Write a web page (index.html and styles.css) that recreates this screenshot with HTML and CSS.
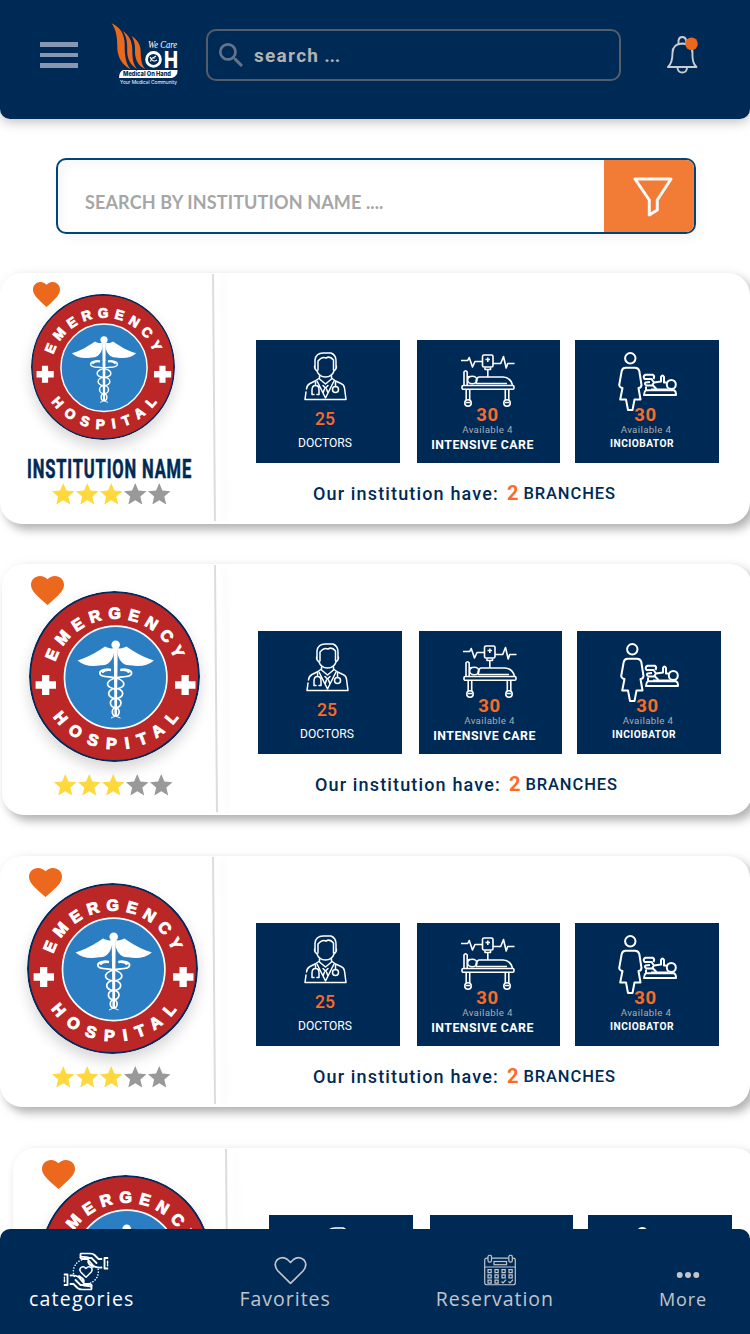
FILE: index.html
```html
<!DOCTYPE html>
<html lang="en">
<head>
<meta charset="utf-8">
<title>Medical On Hand</title>
<link rel="stylesheet" href="styles.css">
</head>
<body>
<svg class="defs" width="0" height="0" aria-hidden="true">
  <defs>
    <path id="arc-top" d="M26.300 70.900A63.500 63.500 0 0 1 146.700 70.900"/>
    <path id="arc-bottom" d="M23.900 126.100A78 78 0 0 0 150.100 126.100"/>
    <symbol id="heart" viewBox="2 3 20 18.35" preserveAspectRatio="none"><path d="M12 21.35l-1.45-1.32C5.4 15.36 2 12.28 2 8.5 2 5.42 4.42 3 7.5 3c1.74 0 3.41.81 4.5 2.09C13.09 3.81 14.76 3 16.5 3 19.58 3 22 5.42 22 8.5c0 3.78-3.4 6.86-8.55 11.54z"/></symbol>
    <symbol id="star" viewBox="2 2 20 19" preserveAspectRatio="none"><path d="M12 17.27 18.18 21l-1.64-7.03L22 9.24l-7.19-.61L12 2 9.19 8.63 2 9.24l5.46 4.73L5.82 21z"/></symbol>
    <symbol id="emblem" viewBox="0 0 171 171" preserveAspectRatio="none">
      <circle cx="85.5" cy="85.5" r="84.5" fill="#bb2626" stroke="#002b5a" stroke-width="2"/>
      <circle cx="86.7" cy="86.4" r="51.2" fill="#2b7ec2" stroke="#fff" stroke-width="1.7"/>
      <path fill="#fff" d="M13 84h7.3v6.3H27v7.4h-6.7v6.3H13v-6.3H6.6v-7.4H13zM152.500 84h7.300v6.300h6.700v7.400h-6.700v6.300h-7.300v-6.300h-6.400v-7.400h6.400z"/>
      <g class="emblem-text">
        <text textLength="155"><textPath href="#arc-top" textLength="155" startOffset="0">EMERGENCY</textPath></text>
        <text textLength="146"><textPath href="#arc-bottom" textLength="146" startOffset="0">HOSPITAL</textPath></text>
      </g>
      <g fill="#fff">
        <circle cx="86.7" cy="53.7" r="4.3"/>
        <path d="M85 57C82 58 79 57 76 55.500C70 59 65 64 48.500 69.500C55 75 63 76 72 74.300C80 75 84 68 85 62zM88.400 57C91.400 58 94.400 57 97.400 55.500C103.400 59 108.400 64 124.900 69.500C118.400 75 110.400 76 101.400 74.300C93.400 75 89.400 68 88.400 62z"/>
        <path d="M84.700 56h4l-.8 69h-2.400z"/>
      </g>
      <g fill="none" stroke="#fff" stroke-width="1.700">
        <path d="M82 79C75 77 70 80 71 83C72 87 82 85 87 87C97 90 98 96 87 98M91.400 79C98.400 77 103.400 80 102.400 83C101.400 87 91.400 85 86.400 87C76.400 90 75.400 96 86.400 98"/>
        <path d="M73 81.500c2-2.500 6-3 9-2.500M100.400 81.500c-2-2.500-6-3-9-2.500" stroke-width="2.500"/>
        <ellipse cx="86.700" cy="102.500" rx="7" ry="5"/><ellipse cx="86.700" cy="112" rx="5.300" ry="4.700"/><ellipse cx="86.700" cy="121" rx="3.400" ry="4"/>
        <path d="M82 127l4.500-2 5 2" stroke-width="1"/>
      </g>
    </symbol>
    <symbol id="doctor" viewBox="0 0 43 49">
      <g fill="none" stroke="#fff" stroke-width="1.500" stroke-linejoin="round" stroke-linecap="round">
        <path d="M11 16V8Q12 1 19 1H27Q32 3 32 9V16M14 14V9Q18 4 22 6Q26 3.500 29.500 8V14M11 13Q9.500 16 13 19Q15 25 21.500 25Q28 25 30 19Q33.500 16 32 13M14 14V18M29.500 14V18"/>
        <path d="M15.500 24V27L21.500 32 27.500 27V24M15.500 26L11 29 6 31.500Q3 33 2.500 37M2 40L1 47.500H42L40.500 36Q40 32.500 36.500 31.200L31.500 29 27.500 26"/>
        <path d="M13 29L21.500 46 30 29M19 33.500L21.500 36 24 33.500M20.500 37L19 41M22.500 37L24 41M11.500 30V33M8 42.500V38Q8 33.500 11.500 33.500T15 38V42.500H13M8 42.500H10M31.500 30V34.500"/><circle cx="31.500" cy="37.500" r="3"/>
      </g>
    </symbol>
    <symbol id="bed" viewBox="0 0 54 54">
      <g fill="none" stroke="#fff" stroke-width="1.600" stroke-linejoin="round">
        <path d="M0 6.500H6.700L8.200 3.500 11.500 13 14 7.500H21M32 9.500H39.700L42.500 2.500 45.200 14 46.700 9.500H53.500"/>
        <rect x="21.500" y="1" width="10.500" height="12" rx="1.500"/>
        <path d="M26.800 3.500V8M24.500 5.500H29M24 13.500V15.500H29.500V13.500M26.800 15.500V22.500M3 31V18Q4.500 15.500 6.200 18V31M6.200 23L9 22.500M17.500 23H42Q49.500 23.500 51.500 31M17.500 23Q14 25 15.500 29.500H46"/>
        <ellipse cx="11.300" cy="26" rx="4.700" ry="3.700"/>
        <rect x="1" y="31.500" width="52" height="3.700" rx="1.300"/>
        <path d="M5.200 35.500V46M8.700 35.500V46M44.300 35.500V46M47.800 35.500V46"/><circle cx="7" cy="49" r="3.200"/><circle cx="46" cy="49" r="3.200"/><path d="M5 48.500H9M44 48.500H48"/>
      </g>
    </symbol>
    <symbol id="incubator" viewBox="0 0 59 59">
      <g fill="none" stroke="#fff" stroke-width="2" stroke-linejoin="round">
        <circle cx="12.300" cy="6.300" r="5.200"/>
        <path d="M7.500 15.800H17Q20.500 16 21.300 19L23.500 33Q23 36 20.500 36L22.500 47.500H16.500L14.500 58H10L8 47.500H2.200L4.500 36Q1.500 35.500 1.200 33L3.700 19Q4.500 16 7.500 15.800z"/>
        <path d="M28 38.200H56Q58.200 39.500 58 43H26Q26 39.500 28 38.200zM28 38V34.500M33 37.500H50"/><circle cx="53.300" cy="32.500" r="4.500"/>
        <path d="M48.500 30.500H46V25Q44.500 22 43 25V29.500L36 30.500 33.500 27H26.500Q24.500 24 27.500 22.800H35Q37 24 35.500 27M36 30.500L34 33.500H28.500Q26 32 27.500 30.500L32 30M35 33.500L38.500 37"/>
      </g>
    </symbol>
  </defs>
</svg>

<div class="app">
  <header class="topbar">
    <div class="menu"><i></i><i></i><i></i></div>
    <svg class="logo" viewBox="0 0 67 62">
      <g fill="#ec681c">
        <path d="M.5.300C9 4 13.700 11 13.700 22C13.500 33 15 41 19.500 46.200C11 42 6.300 34 6.300 24C6.300 14 5 6 .5.300z"/>
        <path d="M11.500 8C18 12 21.300 18 21.300 27C21.300 36 22.500 42 26.200 46.200C19 42 16 35 16.200 27C16.500 18 15 12 11.500 8z"/>
        <path d="M20.500 12.700C27 17 29.700 22 29.700 29C29.700 37 31 43 34.500 46.200C27 43 23.800 36 24 28C24.200 21 23 17 20.500 12.700z"/>
      </g>
      <text x="37" y="25" class="logo-script" textLength="29" lengthAdjust="spacingAndGlyphs">We Care</text>
      <circle cx="42.500" cy="36.400" r="6.900" fill="none" stroke="#fff" stroke-width="2.800"/>
      <path d="M39 34Q42 40 46 37M39.500 38.500Q41 33 43.500 35.500M42 35l3-2" fill="none" stroke="#fff" stroke-width="1.100"/>
      <text x="53" y="44.600" class="logo-h" textLength="14" lengthAdjust="spacingAndGlyphs">H</text>
      <path d="M12 47H66.500Q67 53 61 55H8Q8 49 12 47z" fill="#fff"/>
      <text x="12" y="53.300" class="logo-band" textLength="48" lengthAdjust="spacingAndGlyphs">Medical On Hand</text>
      <text x="9" y="60.800" class="logo-tag" textLength="57" lengthAdjust="spacingAndGlyphs">Your Medical Community</text>
    </svg>
    <div class="search">
      <svg class="search-icon" viewBox="3 3 17.490 17.490"><path d="M15.500 14h-.79l-.28-.27A6.470 6.470 0 0 0 16 9.500 6.500 6.500 0 1 0 9.500 16c1.610 0 3.090-.59 4.230-1.570l.27.28v.79l5 4.990L20.490 19l-4.990-5zm-6 0C7.010 14 5 11.990 5 9.500S7.010 5 9.500 5 14 7.010 14 9.500 11.990 14 9.500 14z"/></svg>
      <span class="search-text">search <span class="dots">...</span></span>
    </div>
    <svg class="bell" viewBox="0 0 32 38">
      <g fill="none" stroke="#c9ccd1" stroke-width="1.900" stroke-linejoin="round">
        <path d="M11.500 7.500V4.500Q12 1 15.300 1T19.200 4.500V7.500M1 31H29.500Q25 27 25.500 17Q25.500 8 15.300 7.500Q5.500 8 5.500 17Q5.500 27 1 31zM10.500 32Q11 36.500 15.300 36.500T20 32"/>
      </g>
      <circle cx="24.500" cy="7.700" r="6.300" fill="#ec681c"/>
    </svg>
  </header>

  <main class="content">
    <div class="filter">
      <span class="filter-text">SEARCH BY INSTITUTION NAME ....</span>
      <div class="filter-button">
        <svg class="funnel" viewBox="0 0 40 40"><path d="M2 2H38L24.300 23V33L16.300 38V23z" fill="none" stroke="#f7f7f7" stroke-width="3" stroke-linejoin="round"/></svg>
      </div>
    </div>

    <section class="card card-named">
      <div class="side">
        <svg class="fav"><use href="#heart"/></svg>
        <svg class="emblem"><use href="#emblem"/></svg>
        <h2 class="name">INSTITUTION NAME</h2>
        <div class="stars"><svg><use href="#star"/></svg><svg><use href="#star"/></svg><svg><use href="#star"/></svg><svg class="off"><use href="#star"/></svg><svg class="off"><use href="#star"/></svg></div>
      </div>
      <div class="divider"></div>
      <div class="info">
        <div class="tiles">
          <div class="tile doctors"><svg><use href="#doctor"/></svg><b>25</b><span class="label">DOCTORS</span></div>
          <div class="tile care"><svg><use href="#bed"/></svg><b>30</b><small>Available 4</small><span class="label">INTENSIVE CARE</span></div>
          <div class="tile incubator"><svg><use href="#incubator"/></svg><b>30</b><small>Available 4</small><span class="label">INCIOBATOR</span></div>
        </div>
        <p class="branches"><span class="have">Our institution have:</span><b>2</b><span class="word">BRANCHES</span></p>
      </div>
    </section>

    <section class="card card-second">
      <div class="side">
        <svg class="fav"><use href="#heart"/></svg>
        <svg class="emblem"><use href="#emblem"/></svg>
        <div class="stars"><svg><use href="#star"/></svg><svg><use href="#star"/></svg><svg><use href="#star"/></svg><svg class="off"><use href="#star"/></svg><svg class="off"><use href="#star"/></svg></div>
      </div>
      <div class="divider"></div>
      <div class="info">
        <div class="tiles">
          <div class="tile doctors"><svg><use href="#doctor"/></svg><b>25</b><span class="label">DOCTORS</span></div>
          <div class="tile care"><svg><use href="#bed"/></svg><b>30</b><small>Available 4</small><span class="label">INTENSIVE CARE</span></div>
          <div class="tile incubator"><svg><use href="#incubator"/></svg><b>30</b><small>Available 4</small><span class="label">INCIOBATOR</span></div>
        </div>
        <p class="branches"><span class="have">Our institution have:</span><b>2</b><span class="word">BRANCHES</span></p>
      </div>
    </section>

    <section class="card">
      <div class="side">
        <svg class="fav"><use href="#heart"/></svg>
        <svg class="emblem"><use href="#emblem"/></svg>
        <div class="stars"><svg><use href="#star"/></svg><svg><use href="#star"/></svg><svg><use href="#star"/></svg><svg class="off"><use href="#star"/></svg><svg class="off"><use href="#star"/></svg></div>
      </div>
      <div class="divider"></div>
      <div class="info">
        <div class="tiles">
          <div class="tile doctors"><svg><use href="#doctor"/></svg><b>25</b><span class="label">DOCTORS</span></div>
          <div class="tile care"><svg><use href="#bed"/></svg><b>30</b><small>Available 4</small><span class="label">INTENSIVE CARE</span></div>
          <div class="tile incubator"><svg><use href="#incubator"/></svg><b>30</b><small>Available 4</small><span class="label">INCIOBATOR</span></div>
        </div>
        <p class="branches"><span class="have">Our institution have:</span><b>2</b><span class="word">BRANCHES</span></p>
      </div>
    </section>

    <section class="card card-last">
      <div class="side">
        <svg class="fav"><use href="#heart"/></svg>
        <svg class="emblem"><use href="#emblem"/></svg>
      </div>
      <div class="divider"></div>
      <div class="info">
        <div class="tiles">
          <div class="tile doctors"><svg><use href="#doctor"/></svg></div>
          <div class="tile care"></div>
          <div class="tile incubator"><svg><use href="#incubator"/></svg></div>
        </div>
      </div>
    </section>
  </main>

  <nav class="tabs">
    <a class="tab active">
      <svg width="45" height="38" viewBox="0 0 45 38">
        <g fill="none" stroke="#fff" stroke-width="1.800" stroke-linejoin="round" stroke-linecap="round">
          <path id="hand" d="M44.200 5.500H41V16H44.200M38 6.500H35L31 2.500Q29 .8 26 .8H17.500Q16 3 18 4.200L24.500 5M24.500 5L20.500 5.200M17 3.800Q16 6 19 6.500H24L30 13.500Q33 15.500 38 15M24.500 5.500H28L33 10.500M25 8Q24 10 26 12L29.500 14.500M44.200 9V10.500M44.200 12.500V13"/>
          <use href="#hand" transform="rotate(180 22.500 19)"/>
          <path d="M22.500 24.800L17.500 19.800Q15.300 17 17.500 15Q20 13 22.500 16Q25 13 27.500 15Q29.700 17 27.500 19.800z" stroke-width="1.500"/>
          <path d="M18 7.500A12.300 12.300 0 0 0 12 26M27 30.500A12.300 12.300 0 0 0 34 14.500" stroke-dasharray=".1 2.700" stroke-width="1.500"/>
        </g>
      </svg>
      <span class="tab-label">categories</span>
    </a>
    <a class="tab">
      <svg width="33" height="28" viewBox="0 0 33 28"><path d="M16.500 26.800L4 14.500Q-1 8.500 3 3.500Q8-1 13.500 3L16.500 6 19.500 3Q25-1 30 3.500Q34 8.500 29 14.500z" fill="none" stroke="#c2c5ca" stroke-width="1.700" stroke-linejoin="round"/></svg>
      <span class="tab-label">Favorites</span>
    </a>
    <a class="tab">
      <svg width="32" height="31" viewBox="0 0 32 31">
        <g fill="none" stroke="#c2c5ca" stroke-width="1.200">
          <rect x=".7" y="3.700" width="30.600" height="26.600" rx="2"/><path d="M1 12.500H31"/><rect x="10" y="7" width="12.500" height="3.200"/>
          <g fill="#002a56"><rect x="4" y=".7" width="3.500" height="7" rx="1.700"/><rect x="24.800" y=".7" width="3.500" height="7" rx="1.700"/></g>
          <path d="M4 15.200h3.200v3H4zM11 15.200h3.200v3H11zM18 15.200h3.200v3H18zM25 15.200h3.200v3H25zM4 20.400h3.200v3H4zM11 20.400h3.200v3H11zM18 20.400h3.200v3H18zM25 20.400h3.200v3H25zM4 25.600h3.200v3H4zM11 25.600h3.200v3H11zM17.500 27l1.500 1.500 3-3.300M24.500 27l1.500 1.500 3-3.300"/>
        </g>
      </svg>
      <span class="tab-label">Reservation</span>
    </a>
    <a class="tab more">
      <svg width="23" height="23" viewBox="0 0 23 23"><g fill="#c2c5ca"><circle cx="3.200" cy="11.500" r="3"/><circle cx="11.500" cy="11.500" r="3"/><circle cx="19.800" cy="11.500" r="3"/></g></svg>
      <span class="tab-label">More</span>
    </a>
  </nav>
</div>
</body>
</html>
```
FILE: styles.css
```css
* { box-sizing: border-box; }
body { margin: 0; background: #fff; font-family: Roboto, "Liberation Sans", sans-serif; }
.defs { position: absolute; }
svg { display: block; flex: none; }
.app { width: 750px; height: 1334px; display: flex; flex-direction: column; overflow: hidden; }

.topbar {
  flex: none; height: 119px; display: flex; align-items: flex-start;
  background: #002a56; border-radius: 0 0 10px 10px;
  box-shadow: 0 3px 12px rgba(0, 0, 0, .25); z-index: 1;
}
.menu { width: 38px; margin: 42px 0 0 39.500px; display: flex; flex-direction: column; gap: 6px; }
.menu i { height: 4.500px; background: #8797b1; }
.logo { width: 67px; height: 62px; margin: 23px 0 0 33.500px; overflow: visible; }
.logo text { fill: #fff; font-family: Inter, sans-serif; }
.logo .logo-script { font: italic 11px "Liberation Serif", serif; }
.logo .logo-h { font-size: 22.500px; font-weight: 800; }
.logo .logo-band { font-size: 6.800px; font-weight: 800; fill: #002a56; }
.logo .logo-tag { font-size: 4.600px; }
.search {
  width: 415px; height: 52px; margin: 29px 0 0 28px; padding-left: 11px;
  display: flex; align-items: center; gap: 11px;
  border: 2px solid #545e6a; border-radius: 10px;
  color: #b3b3b3; font-size: 19px; font-weight: 700; letter-spacing: 1.300px;
}
.search-text { padding-top: 1px; }
.dots { letter-spacing: -.3px; margin-left: -1px; }
.search-icon { width: 24px; height: 24px; fill: #64748b; }
.bell { width: 32px; height: 38px; margin: 36px 0 0 46px; }

.content { flex: 1; min-height: 0; overflow: hidden; }
.filter {
  width: 640px; height: 76px; margin: 39px 0 39px 56px; display: flex; align-items: stretch;
  border: 2px solid #004479; border-radius: 10px; overflow: hidden;
  box-shadow: 4px 5px 10px rgba(0, 0, 0, .04), inset 6px 6px 10px rgba(0, 0, 0, .03);
}
.filter-text {
  flex: 1; padding: 31px 0 0 27px; line-height: 22px; white-space: nowrap;
  color: #a6a6a6; font-family: Lato, sans-serif; font-size: 18px; font-weight: 700; letter-spacing: .13px;
}
.filter-button { width: 90px; padding: 17px 0 0 29px; background: #f27c35; }
.funnel { width: 40px; height: 40px; }

.card {
  position: relative; width: 750px; height: 251px; margin-bottom: 41px; display: flex;
  background: #fff; border-radius: 22px;
  box-shadow: 5px 6px 10px rgba(0, 0, 0, .28), 2px 0 12px rgba(0, 0, 0, .05);
}
.side { width: 213px; padding: 27px 0 0 27px; }
.emblem { width: 171px; height: 171px; border-radius: 50%; box-shadow: 0 7px 14px rgba(0, 0, 0, .16); }
.fav { position: absolute; left: 29px; top: 12px; width: 33px; height: 29px; fill: #ec681c; }
.stars { display: flex; gap: 1.500px; margin: 12px 0 0 25px; }
.card-named { margin-bottom: 40px; }
.card-named .side { padding: 21px 0 0 31px; }
.card-named .emblem { width: 144px; height: 146px; }
.card-named .fav { left: 33px; top: 9px; width: 27px; height: 25px; }
.card-named .stars { margin: -1px 0 0 21px; }
.card-second { margin-left: 2px; }
.card-last { margin-left: 12.500px; width: 744px; }
.emblem-text { fill: #fff; stroke: #fff; stroke-width: 1px; font: bold 16px "Liberation Sans", sans-serif; }
.name {
  width: 250px; margin: 15px 0 0 -4.500px; color: #002a56; white-space: nowrap;
  font-size: 25px; line-height: 29px; font-weight: 700; letter-spacing: 1.300px;
  transform: scaleX(.66); transform-origin: 0 0; -webkit-text-stroke: .6px #002a56;
}
.stars svg { width: 22.500px; height: 21.500px; fill: #ffd83d; }
.stars .off { fill: #999; }
.divider {
  width: 2px; height: 247px; margin-top: 1px; background: #dcdcdc; transform: rotate(-.45deg);
  box-shadow: 10px 2px 6px rgba(0, 0, 0, .05);
}
.info { flex: 1; padding: 67px 0 0 41px; }
.tiles { display: flex; gap: 15px; }
.tile {
  width: 144px; height: 123px; display: flex; flex-direction: column; align-items: center;
  background: #002a56; color: #fff;
}
.tile b { color: #fc6a27; font-size: 18.500px; letter-spacing: .6px; }
.tile small { color: #a9adb3; font-size: 9.700px; line-height: 12px; margin-top: 1px; letter-spacing: .35px; }
.label { line-height: 14px; white-space: nowrap; }
.doctors { padding: 12px 6px 0 0; }
.doctors svg { width: 43px; height: 49px; }
.tile.doctors b { margin-top: 7.500px; line-height: 20px; font-weight: 500; letter-spacing: 0; font-size: 17.500px; }
.doctors .label { margin-top: 7px; font-size: 12.100px; }
.care { width: 143px; margin-left: 2px; padding: 14px 2px 0 0; }
.care svg { width: 54px; height: 54px; }
.care b, .incubator b { line-height: 15px; }
.care .label { margin: 2px 10px 0 0; font-size: 12.300px; font-weight: 700; letter-spacing: .5px; }
.incubator { padding: 12px 0 0; }
.incubator svg { width: 59px; height: 59px; }
.incubator b { margin: -3px 3px 0 0; }
.incubator small { margin-right: 2px; }
.incubator .label { margin: 1px 10px 0 0; font-size: 10.200px; font-weight: 700; letter-spacing: .45px; }
.branches {
  display: flex; align-items: center; margin: 19px 0 0 57px; height: 22px;
  color: #002a56; font-weight: 500; white-space: nowrap;
}
.have { font-size: 18px; letter-spacing: 1.150px; }
.branches b { margin: 0 5px 0 8px; color: #fc6a27; font-size: 20px; }
.word { font-size: 16.500px; letter-spacing: .9px; padding-top: 1px; }

.tabs {
  flex: none; height: 105px; padding: 0 43px 0 29px; display: flex; justify-content: space-between;
  background: #002a56; border-radius: 10px 10px 0 0; z-index: 1;
}
.tab { height: 83px; display: flex; flex-direction: column; align-items: center; color: #c2c5ca; font-family: "Open Sans", sans-serif; }
.tab svg { margin: auto 0; transform: translate(5px, 12.500px); }
.tab-label { font-size: 19.500px; line-height: 26px; letter-spacing: 1px; }
.active { color: #fff; }
.active svg { transform: translate(4.500px, 13.500px); }
.active .tab-label { letter-spacing: 1.200px; }
.more svg { transform: translate(5.500px, 17.500px); }
.more .tab-label { font-size: 18px; letter-spacing: .9px; }
```
